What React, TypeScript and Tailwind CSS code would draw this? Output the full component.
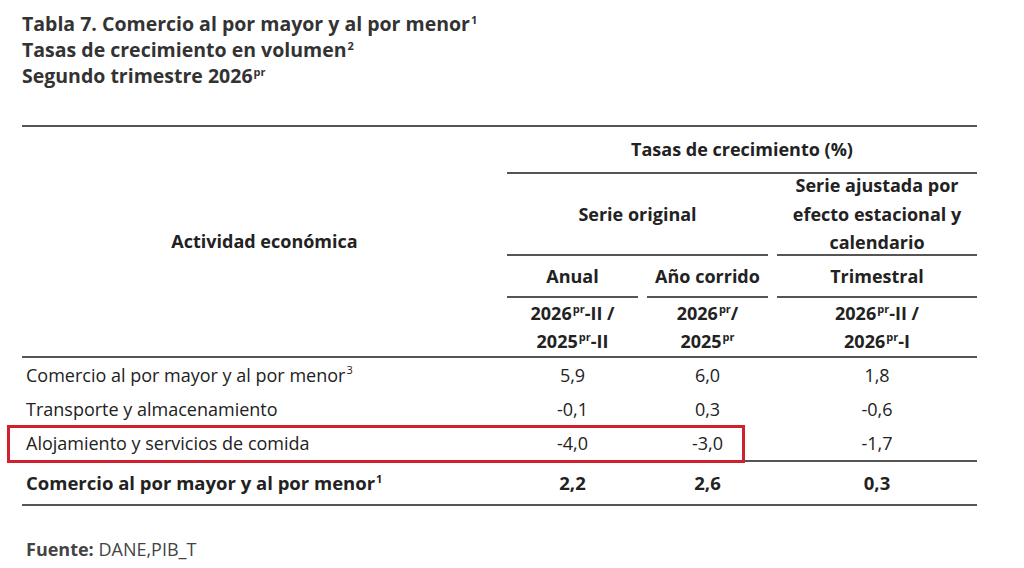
import React from "react";

const Sup = ({ children }: { children: React.ReactNode }) => (
  <sup className="text-[11px] font-bold relative -top-[7px] ml-[1px]">{children}</sup>
);

const SupR = ({ children }: { children: React.ReactNode }) => (
  <sup className="text-[11px] relative -top-[8px] ml-[1px]">{children}</sup>
);

export default function App() {
  const rows = [
    { name: "Comercio al por mayor y al por menor", sup: "3", a: "5,9", b: "6,0", c: "1,8" },
    { name: "Transporte y almacenamiento", sup: "", a: "-0,1", b: "0,3", c: "-0,6" },
    { name: "Alojamiento y servicios de comida", sup: "", a: "-4,0", b: "-3,0", c: "-1,7", box: true },
  ];
  return (
    <div
      className="w-[1024px] h-[568px] bg-white text-[#222] overflow-hidden"
      style={{ fontFamily: '"Open Sans", "Noto Sans", sans-serif' }}
    >
      <div className="pt-[11px] pl-[22px] text-[19.5px] leading-[26px] font-bold text-[#333]">
        <div>
          Tabla 7. Comercio al por mayor y al por menor<Sup>1</Sup>
        </div>
        <div>
          Tasas de crecimiento en volumen<Sup>2</Sup>
        </div>
        <div>
          Segundo trimestre 2026<Sup>pr</Sup>
        </div>
      </div>

      <div className="ml-[22px] mt-[36px] w-[955px]">
        {/* Header */}
        <div className="grid grid-cols-[485px_131px_9px_121px_9px_200px] grid-rows-[47px_82px_42px_58px] border-t-2 border-b-2 border-[#555] text-[18px] font-bold text-[#222]">
          <div className="row-start-1 row-span-4 col-start-1 flex items-center justify-center">
            Actividad económica
          </div>
          <div className="row-start-1 col-start-2 col-span-5 border-b-2 border-[#555] flex items-center justify-center">
            Tasas de crecimiento (%)
          </div>
          <div className="row-start-2 col-start-2 col-span-3 border-b-2 border-[#555] flex items-center justify-center">
            Serie original
          </div>
          <div className="row-start-2 col-start-6 border-b-2 border-[#555] flex items-center justify-center text-center leading-[28.5px]">
            <div>
              Serie ajustada por
              <br />
              efecto estacional y
              <br />
              calendario
            </div>
          </div>
          <div className="row-start-3 col-start-2 border-b-2 border-[#555] flex items-center justify-center">
            Anual
          </div>
          <div className="row-start-3 col-start-4 border-b-2 border-[#555] flex items-center justify-center">
            Año corrido
          </div>
          <div className="row-start-3 col-start-6 border-b-2 border-[#555] flex items-center justify-center">
            Trimestral
          </div>
          <div className="row-start-4 col-start-2 flex items-center justify-center text-center leading-[28px]">
            <div>
              2026<Sup>pr</Sup>-II /
              <br />
              2025<Sup>pr</Sup>-II
            </div>
          </div>
          <div className="row-start-4 col-start-4 flex items-center justify-center text-center leading-[28px]">
            <div>
              2026<Sup>pr</Sup>/
              <br />
              2025<Sup>pr</Sup>
            </div>
          </div>
          <div className="row-start-4 col-start-6 flex items-center justify-center text-center leading-[28px]">
            <div>
              2026<Sup>pr</Sup>-II /
              <br />
              2026<Sup>pr</Sup>-I
            </div>
          </div>
        </div>

        {/* Body */}
        <div className="text-[18px]">
          {rows.map((r, i) => (
            <div
              key={i}
              className={`relative grid grid-cols-[485px_131px_9px_121px_9px_200px] items-center ${
                i === 2 ? "h-[36px] border-b-2 border-[#555]" : "h-[34px]"
              }`}
            >
              <div className="pl-[4px]">
                {r.name}
                {r.sup && <SupR>{r.sup}</SupR>}
              </div>
              <div className="text-center">{r.a}</div>
              <div />
              <div className="text-center">{r.b}</div>
              <div />
              <div className="text-center">{r.c}</div>
              {r.box && (
                <div className="absolute left-[-15px] top-[-1px] w-[738px] h-[38px] border-[3px] border-[#d0202e]" />
              )}
            </div>
          ))}
          <div className="grid grid-cols-[485px_131px_9px_121px_9px_200px] items-center h-[44px] border-b-2 border-[#555] font-bold text-[18.5px]">
            <div className="pl-[4px]">
              Comercio al por mayor y al por menor<Sup>1</Sup>
            </div>
            <div className="text-center">2,2</div>
            <div />
            <div className="text-center">2,6</div>
            <div />
            <div className="text-center">0,3</div>
          </div>
        </div>
      </div>

      <div className="mt-[30px] ml-[26px] text-[18px] text-[#444]">
        <span className="font-bold">Fuente:</span> DANE,PIB_T
      </div>
    </div>
  );
}
